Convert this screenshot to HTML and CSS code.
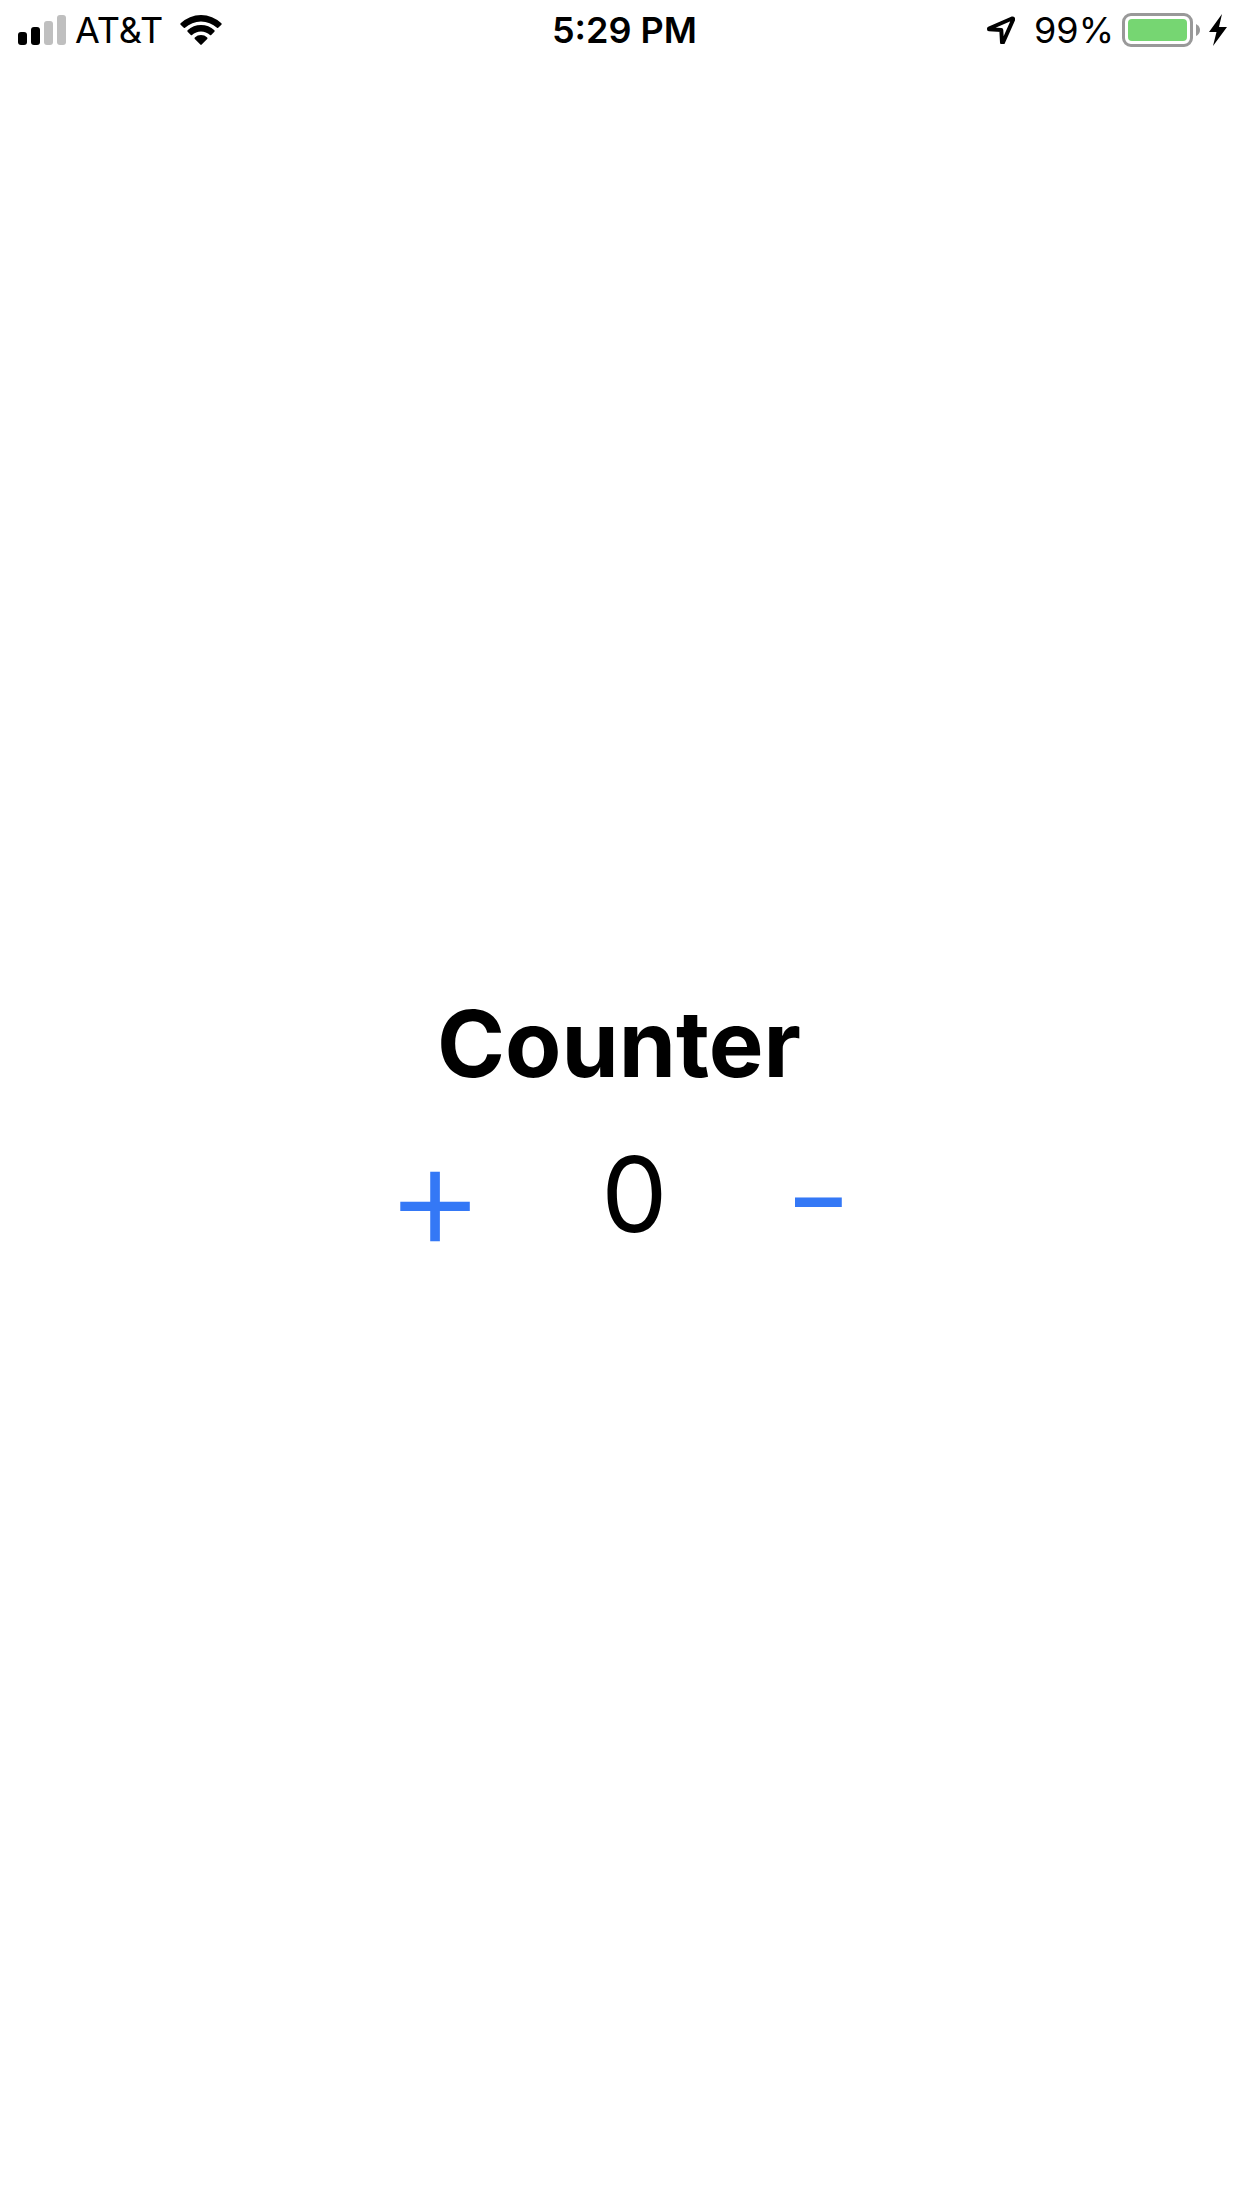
FILE: index.html
```html
<!DOCTYPE html>
<html lang="en">
<head>
<meta charset="utf-8">
<meta name="viewport" content="width=device-width, initial-scale=1">
<title>Counter</title>
<link rel="stylesheet" href="styles.css">
</head>
<body>
<header class="status">
  <div class="status-side">
    <svg class="signal" width="48" height="30" viewBox="0 0 48 30" aria-hidden="true">
      <rect x="0" y="17" width="9" height="13" rx="3"/>
      <rect x="13" y="12" width="9" height="18" rx="3"/>
      <rect class="signal-off" x="26" y="6" width="9" height="24" rx="3"/>
      <rect class="signal-off" x="39" y="0" width="9" height="30" rx="3"/>
    </svg>
    <span class="carrier">AT&amp;T</span>
    <svg class="wifi" width="42" height="30" viewBox="0 0 42 30" aria-hidden="true">
      <path d="M0.6 8.2 A29.5 29.5 0 0 1 41.4 8.2 Q42 9 41.4 9.7 L38.2 12.8 Q37.6 13.3 37 12.8 A23.5 23.5 0 0 0 5 12.8 Q4.4 13.3 3.8 12.8 L0.6 9.7 Q0 9 0.6 8.2Z"/>
      <path d="M7.6 15.3 A19.5 19.5 0 0 1 34.4 15.3 Q35 16.1 34.4 16.8 L31.2 19.9 Q30.6 20.4 30 19.9 A13.3 13.3 0 0 0 12 19.9 Q11.4 20.4 10.8 19.9 L7.6 16.8 Q7 16.1 7.6 15.3Z"/>
      <path d="M14.8 22.4 A9.5 9.5 0 0 1 27.2 22.4 Q27.8 23.2 27.2 23.9 L21.7 29.6 Q21 30.2 20.3 29.6 L14.8 23.9 Q14.2 23.2 14.8 22.4Z"/>
    </svg>
  </div>
  <time class="clock">5:29 PM</time>
  <div class="status-side status-right">
    <svg class="location" width="28" height="28" viewBox="0 0 28 28" aria-hidden="true">
      <path d="M2 12.5 L25 2.5 Q26.5 2.2 26 4 L16 26.5 L15 26.5 L14.3 14 L2 13.2Z"/>
    </svg>
    <span class="percent">99%</span>
    <svg class="battery" width="78" height="34" viewBox="0 0 78 34" aria-hidden="true">
      <rect class="battery-case" x="1.5" y="1.5" width="68" height="31" rx="7.5"/>
      <rect class="battery-level" x="6" y="6" width="59" height="22" rx="4"/>
      <path class="battery-tip" d="M74 11 Q78 13 78 17 Q78 21 74 23Z"/>
    </svg>
    <svg class="bolt" width="18" height="32" viewBox="0 0 18 32" aria-hidden="true">
      <path d="M13 0 L0 18 H7.5 L4 32 L18 13 H10Z"/>
    </svg>
  </div>
</header>
<main class="counter">
  <h1 class="title">Counter</h1>
  <div class="controls">
    <button class="step" type="button" aria-label="Increase">+</button>
    <output class="value">0</output>
    <button class="step" type="button" aria-label="Decrease">-</button>
  </div>
</main>
</body>
</html>
```
FILE: styles.css
```css
body {
  margin: 0;
  min-height: 100vh;
  display: flex;
  flex-direction: column;
  background: #fff;
  color: #000;
  font-family: Inter, "Liberation Sans", sans-serif;
}

.status {
  display: grid;
  grid-template-columns: 1fr auto 1fr;
  align-items: center;
  height: 60px;
  padding: 0 15px 0 18px;
  font-size: 36px;
  line-height: 60px;
}

.status-side {
  display: flex;
  align-items: center;
}

.status-right {
  justify-content: flex-end;
}

.status svg {
  flex: none;
}

.signal-off {
  fill: #bfbfbf;
}

.carrier {
  margin: 0 17px 0 9px;
}

.clock {
  padding-left: 4px;
  font-weight: 600;
}

.location {
  margin-right: 19px;
  fill: none;
  stroke: #000;
  stroke-width: 4;
  stroke-linejoin: round;
}

.percent {
  margin-right: 8px;
}

.battery {
  margin-right: 9px;
}

.battery-case {
  fill: none;
  stroke: #999;
  stroke-width: 3;
}

.battery-level {
  fill: #76d672;
}

.battery-tip {
  fill: #999;
}

.counter {
  flex: 1;
  display: flex;
  flex-direction: column;
  align-items: center;
  justify-content: center;
  padding-right: 4px;
}

.title {
  margin: 0;
  font-size: 92px;
  font-weight: 700;
  line-height: 120px;
}

.controls {
  display: flex;
  align-items: center;
  gap: 116px;
}

.value,
.step {
  font-size: 105px;
  line-height: 180px;
}

.step {
  padding: 0;
  border: 0;
  background: none;
  color: #3478f6;
  font-family: inherit;
  font-size: 154px;
  font-weight: 300;
  cursor: pointer;
}
```
